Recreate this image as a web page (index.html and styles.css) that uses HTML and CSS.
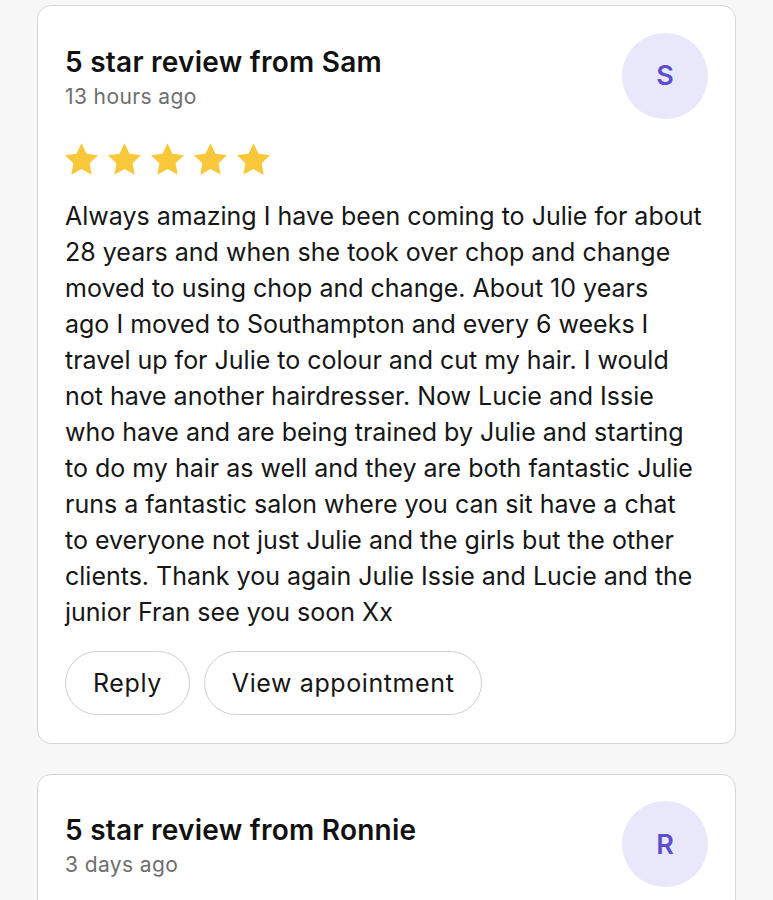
FILE: index.html
```html
<!DOCTYPE html>
<html lang="en">

<head>
  <meta charset="UTF-8">
  <meta name="viewport" content="width=device-width, initial-scale=1.0">
  <title>Reviews</title>
  <link rel="stylesheet" href="styles.css">
</head>

<body>
  <div class="reviews">
    <div class="card">
      <div class="head">
        <div class="who">
          <h2 class="title">5 star review from Sam</h2>
          <div class="time">13 hours ago</div>
        </div>
        <div class="avatar">S</div>
      </div>
      <div class="stars">
        <svg class="star" viewBox="2.3 2.2 19.4 18.5"><path d="M12 2.2l2.95 6.2 6.75.85-4.95 4.7 1.25 6.7L12 17.4l-6 3.25 1.25-6.7L2.3 9.25l6.75-.85z"/></svg>
        <svg class="star" viewBox="2.3 2.2 19.4 18.5"><path d="M12 2.2l2.95 6.2 6.75.85-4.95 4.7 1.25 6.7L12 17.4l-6 3.25 1.25-6.7L2.3 9.25l6.75-.85z"/></svg>
        <svg class="star" viewBox="2.3 2.2 19.4 18.5"><path d="M12 2.2l2.95 6.2 6.75.85-4.95 4.7 1.25 6.7L12 17.4l-6 3.25 1.25-6.7L2.3 9.25l6.75-.85z"/></svg>
        <svg class="star" viewBox="2.3 2.2 19.4 18.5"><path d="M12 2.2l2.95 6.2 6.75.85-4.95 4.7 1.25 6.7L12 17.4l-6 3.25 1.25-6.7L2.3 9.25l6.75-.85z"/></svg>
        <svg class="star" viewBox="2.3 2.2 19.4 18.5"><path d="M12 2.2l2.95 6.2 6.75.85-4.95 4.7 1.25 6.7L12 17.4l-6 3.25 1.25-6.7L2.3 9.25l6.75-.85z"/></svg>
      </div>
      <p class="text">Always amazing I have been coming to Julie for about 28 years and when she took over chop and change moved to using chop and change. About 10 years ago&nbsp;I moved to Southampton and every 6 weeks I travel up for Julie to colour and cut my hair. I would not have another hairdresser. Now Lucie and Issie who have and are being trained by Julie and starting to do my hair as well and they are both fantastic Julie runs a fantastic salon where you can sit have a chat to everyone not just Julie and the girls but the other clients. Thank you again Julie Issie and Lucie and the junior Fran see you soon Xx</p>
      <div class="actions">
        <button type="button" class="btn">Reply</button>
        <button type="button" class="btn">View appointment</button>
      </div>
    </div>

    <div class="card">
      <div class="head">
        <div class="who">
          <h2 class="title">5 star review from Ronnie</h2>
          <div class="time">3 days ago</div>
        </div>
        <div class="avatar">R</div>
      </div>
    </div>
  </div>
</body>

</html>
```

FILE: styles.css
```css
* {
  margin: 0;
  padding: 0;
  box-sizing: border-box;
}

body {
  background-color: #f7f7f7;
  font-family: "Inter", "Liberation Sans", sans-serif;
  color: #161616;
}

.reviews {
  padding: 5px 37px 0;
  display: flex;
  flex-direction: column;
  gap: 30px;
}

.card {
  background-color: #fff;
  border: 1.5px solid #d6d6d6;
  border-radius: 14px;
  padding: 26.5px 27px 28px;
}

.head {
  display: flex;
  justify-content: space-between;
  align-items: flex-start;
}

.who {
  padding-top: 12px;
}

.title {
  font-size: 28px;
  font-weight: 600;
  line-height: 34px;
  letter-spacing: 0.25px;
  color: #111;
}

.time {
  font-size: 21px;
  line-height: 28px;
  letter-spacing: 0.4px;
  color: #6e6e6e;
  margin-top: 4px;
}

.avatar {
  width: 86px;
  height: 86px;
  border-radius: 50%;
  background-color: #e9e8fb;
  color: #5b4fd0;
  font-size: 27px;
  font-weight: 600;
  display: flex;
  align-items: center;
  justify-content: center;
}

.stars {
  display: flex;
  gap: 10px;
  margin-top: 24px;
}

.star {
  width: 33px;
  height: 32px;
  fill: #f9c73a;
}

.text {
  max-width: 638px;
  font-size: 25px;
  line-height: 36px;
  margin-top: 23px;
}

.actions {
  display: flex;
  gap: 14px;
  margin-top: 21px;
}

.btn {
  font-family: inherit;
  font-size: 25px;
  letter-spacing: 0.6px;
  color: #161616;
  background-color: #fff;
  border: 1.5px solid #cfcfcf;
  border-radius: 32px;
  height: 64px;
  padding: 0 27px;
}
```
